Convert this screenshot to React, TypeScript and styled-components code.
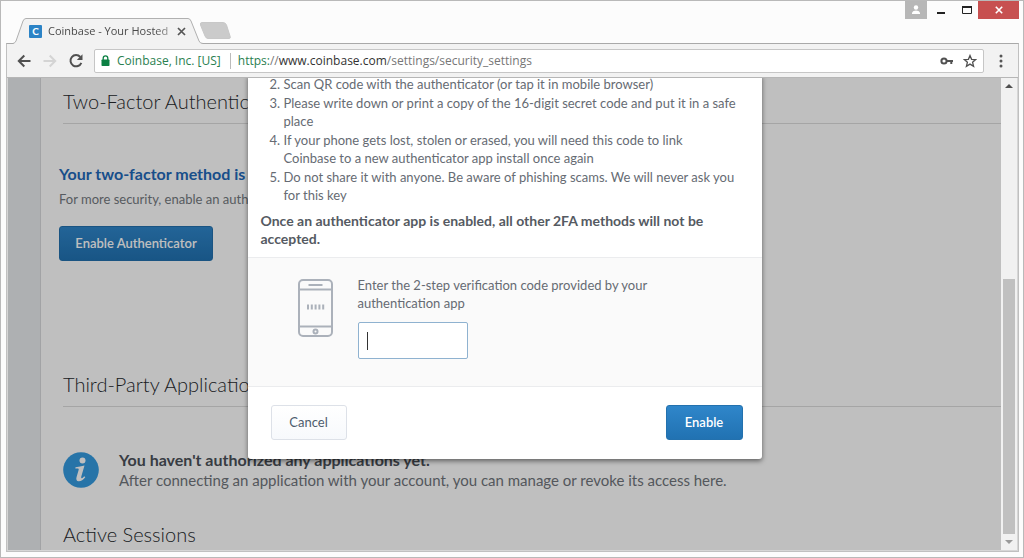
import React from "react";
import styled, { createGlobalStyle } from "styled-components";

const uiFont = '"Open Sans", "Noto Sans", sans-serif';
const bodyFont = 'Lato, "Open Sans", sans-serif';

const GlobalStyle = createGlobalStyle`
  *, *::before, *::after { box-sizing: border-box; }
  body { margin: 0; font-family: ${bodyFont}; }
  h2, p, ol { margin: 0; }
  button { font-family: inherit; cursor: pointer; }
`;

const Window = styled.div`
  display: flex;
  flex-direction: column;
  height: 100vh;
  padding: 0 4px 5px 5px;
  border: 1px solid #b9b9b9;
  background: #fcfcfc;
  overflow: hidden;
`;

const TitleBar = styled.header`
  display: flex;
  justify-content: space-between;
  height: 42px;
  flex: none;
  padding-left: 7px;
`;

const Tabs = styled.div`
  display: flex;
  align-items: flex-end;
`;

const Tab = styled.div`
  position: relative;
  z-index: 1;
  display: flex;
  align-items: center;
  width: 190px;
  height: 26px;
  margin-bottom: -1px;
  padding: 0 14px 0 16px;
  font: 11px/18px ${uiFont};
  color: #4a4a4a;
`;

const TabShape = styled.svg`
  position: absolute;
  inset: 0;
  z-index: -1;
`;

const Favicon = styled.span`
  display: flex;
  align-items: center;
  justify-content: center;
  width: 13px;
  height: 13px;
  margin-right: 6px;
  border-radius: 1px;
  background: #2b83c6;
  color: #fff;
  font: bold 10px/12px ${bodyFont};
`;

const TabTitle = styled.span`
  flex: 1;
  white-space: nowrap;
  mask-image: linear-gradient(to right, #000 85%, transparent 110%);
`;

const PlainButton = styled.button`
  display: flex;
  align-items: center;
  justify-content: center;
  flex: none;
  padding: 0;
  border: 0;
  background: none;
  color: #555;
`;

const CloseTab = styled(PlainButton)`
  width: 16px;
  height: 16px;
`;

const NewTab = styled(PlainButton)`
  height: 24px;
  margin-left: -4px;
`;

const WindowControls = styled.div`
  display: flex;
  align-items: flex-start;
`;

const WindowButton = styled(PlainButton)<{ $width: number; $fill?: string }>`
  width: ${(p) => p.$width}px;
  height: 18px;
  background: ${(p) => p.$fill ?? "none"};
`;

const Frame = styled.div`
  display: flex;
  flex-direction: column;
  flex: 1;
  min-height: 0;
  border: 1px solid #c0c0c0;
  border-top-color: #a9a9a9;
`;

const Toolbar = styled.nav`
  display: flex;
  align-items: center;
  flex: none;
  height: 34px;
  padding: 0 8px 0 9px;
  border-bottom: 1px solid #b6b6b6;
  background: #f2f2f2;
`;

const NavButton = styled(PlainButton)`
  width: 16px;
  height: 16px;
  margin-right: 10px;
`;

const AddressBar = styled.div`
  display: flex;
  align-items: center;
  flex: 1;
  height: 24px;
  padding: 0 5px 0 5px;
  border: 1px solid #c6c6c6;
  border-radius: 2px;
  background: #fff;
  font: 12px/20px ${uiFont};
  color: #777;
`;

const Identity = styled.span`
  margin-left: 6px;
  padding-right: 9px;
  border-right: 1px solid #bbb;
  color: #2a8050;
  line-height: 16px;
`;

const Url = styled.span`
  flex: 1;
  margin-left: 7px;
  white-space: nowrap;
`;

const Scheme = styled.span`
  color: #2a8050;
`;

const Host = styled.span`
  color: #333;
`;

const AddressAction = styled(PlainButton)`
  width: 16px;
  margin-left: 7px;
`;

const MenuButton = styled(PlainButton)`
  width: 18px;
  height: 18px;
  margin-left: 8px;
`;

const Content = styled.div`
  display: flex;
  flex: 1;
  min-height: 0;
  border: 1px solid #d6d6d6;
  border-top: 0;
`;

const Viewport = styled.div`
  position: relative;
  display: flex;
  flex: 1;
  overflow: hidden;
`;

const Sidebar = styled.aside`
  flex: none;
  width: 33px;
  border-right: 1px solid #d8dadc;
  background: #e9ebee;
`;

const Page = styled.main`
  flex: 1;
  min-width: 0;
  padding: 9px 0 0 22px;
  background: #fff;
`;

const SectionTitle = styled.h2<{ $space?: number }>`
  margin-top: ${(p) => p.$space ?? 0}px;
  padding-bottom: 8px;
  border-bottom: 1px solid #dcdcdc;
  font-size: 20px;
  line-height: 28px;
  font-weight: 300;
  color: #26292d;
`;

const Method = styled.section`
  margin: 38px 0 0 -4px;
`;

const MethodTitle = styled.p`
  font-size: 16px;
  line-height: 24px;
  font-weight: 700;
  color: #2268b8;
`;

const MethodText = styled.p`
  margin: 3px 0 17px;
  font-size: 13px;
  line-height: 20px;
  color: #757a80;
`;

const Button = styled.button<{ $kind: "primary" | "plain"; $width: number }>`
  width: ${(p) => p.$width}px;
  height: 35px;
  padding: 0 0 1px;
  border: 1px solid ${(p) => (p.$kind === "primary" ? "#2371ae" : "#dde1e8")};
  border-radius: 3px;
  background: ${(p) =>
    p.$kind === "primary"
      ? "linear-gradient(#2f86ca, #2172b2)"
      : "linear-gradient(#fff, #f7f9fc)"};
  color: ${(p) => (p.$kind === "primary" ? "#fff" : "#4e5c6e")};
  font-size: 13px;
  font-weight: ${(p) => (p.$kind === "primary" ? 600 : 400)};
`;

const Notice = styled.section`
  display: flex;
  align-items: center;
  gap: 20px;
  margin-top: 43px;
  font-size: 15px;
  line-height: 20px;
  color: #70757b;
`;

const NoticeTitle = styled.p`
  font-size: 16px;
  font-weight: 700;
  color: #4b5159;
`;

const Overlay = styled.div`
  position: absolute;
  inset: 0;
  display: flex;
  align-items: flex-end;
  justify-content: center;
  padding-bottom: 91px;
  background: rgba(0, 0, 0, 0.25);
`;

const Dialog = styled.div`
  width: 514px;
  border-radius: 0 0 3px 3px;
  background: #fff;
  box-shadow: 0 2px 5px rgba(0, 0, 0, 0.5);
  font-size: 13px;
  line-height: 18px;
  color: #666b73;
`;

const Instructions = styled.div`
  padding: 0 13px 9px;
`;

const Steps = styled.ol`
  display: grid;
  gap: 1px;
  padding-left: 23px;
`;

const Warning = styled.p`
  max-width: 460px;
  margin-top: 8px;
  font-size: 14px;
  font-weight: 700;
  color: #555a62;
`;

const CodePanel = styled.div`
  display: flex;
  gap: 25px;
  padding: 18px 50px 27px;
  border: solid #ebecee;
  border-width: 1px 0;
  background: #fafafa;
`;

const PhoneIcon = styled.svg`
  flex: none;
  margin-top: 3px;
`;

const CodeField = styled.div`
  max-width: 310px;
`;

const CodeLabel = styled.label`
  display: block;
  margin-bottom: 10px;
`;

const InputWrap = styled.div`
  position: relative;
  width: 110px;
`;

const CodeInput = styled.input`
  display: block;
  width: 100%;
  height: 37px;
  padding: 0 9px;
  border: 1px solid #8fb2d0;
  border-radius: 2px;
  background: #fff;
  font: 14px/18px ${bodyFont};
  outline: none;
`;

const Caret = styled.span`
  position: absolute;
  top: 10px;
  left: 9px;
  width: 1px;
  height: 18px;
  background: #333;
`;

const DialogFooter = styled.div`
  display: flex;
  justify-content: space-between;
  padding: 18px 19px 19px 23px;
`;

const Scrollbar = styled.div`
  display: flex;
  flex-direction: column;
  flex: none;
  width: 16px;
  background: #f1f1f1;
`;

const ScrollArrow = styled(PlainButton)`
  height: 16px;
`;

const Track = styled.div`
  display: flex;
  flex: 1;
  flex-direction: column;
  justify-content: flex-end;
  padding: 0 2px;
`;

const Thumb = styled.div`
  height: 58%;
  background: #c0c0c0;
`;

export default function App() {
  return (
    <Window>
      <GlobalStyle />
      <TitleBar>
        <Tabs>
          <Tab>
            <TabShape width="190" height="26" viewBox="0 0 190 26" aria-hidden="true">
              <path d="M0 26 Q2 25 3 23 L10 3 Q11 .5 13 .5 H175 Q177 .5 178 3 L186 23 Q187 25 190 26Z" fill="#f2f2f2" />
              <path d="M0 25.5 Q2 25 3 23 L10 3 Q11 .5 13 .5 H175 Q177 .5 178 3 L186 23 Q187 25.500 190 25.500" fill="none" stroke="#b0b0b0" />
            </TabShape>
            <Favicon>C</Favicon>
            <TabTitle>Coinbase - Your Hosted</TabTitle>
            <CloseTab aria-label="Close tab">
              <svg width="9" height="9" viewBox="0 0 9 9" stroke="currentColor" strokeWidth="1.7">
                <path d="M1 1l7 7M8 1l-7 7" />
              </svg>
            </CloseTab>
          </Tab>
          <NewTab aria-label="New tab">
            <svg width="34" height="18" viewBox="0 0 34 18">
              <path d="M3 .5H24Q26.500 .5 27.500 3L31 14Q32 16.500 30 16.500H9Q7 16.500 6 14L1.500 3Q.8 .5 3 .5Z" fill="#cbcbcb" stroke="#c8c8c8" />
            </svg>
          </NewTab>
        </Tabs>
        <WindowControls>
          <WindowButton $width={22} $fill="#b7b7b7" aria-label="Profile">
            <svg width="10" height="10" viewBox="0 0 10 10" fill="#fff">
              <circle cx="5" cy="2.500" r="2.200" />
              <path d="M1 9V7.500Q2 5.500 5 5.500T9 7.500V9Z" />
            </svg>
          </WindowButton>
          <WindowButton $width={28} aria-label="Minimize">
            <svg width="8" height="10"><path d="M0 8H8" stroke="#222" strokeWidth="2" /></svg>
          </WindowButton>
          <WindowButton $width={23} aria-label="Maximize">
            <svg width="10" height="8" viewBox="0 0 10 8"><path d="M.5 1H9.500V7.500H.5Z" fill="none" stroke="#222" /><path d="M0 1H10" stroke="#222" strokeWidth="2" /></svg>
          </WindowButton>
          <WindowButton $width={41} $fill="#c75050" aria-label="Close">
            <svg width="8" height="8" viewBox="0 0 8 8"><path d="M.8 .8l6.400 6.400M7.200 .8L.8 7.200" stroke="#fff" strokeWidth="1.600" /></svg>
          </WindowButton>
        </WindowControls>
      </TitleBar>

      <Frame>
        <Toolbar>
          <NavButton aria-label="Back">
            <svg width="14" height="14" viewBox="0 0 14 14" fill="none" stroke="#505050" strokeWidth="2"><path d="M13.500 7H2M7.300 1.500L1.800 7l5.500 5.500" /></svg>
          </NavButton>
          <NavButton aria-label="Forward">
            <svg width="14" height="14" viewBox="0 0 14 14" fill="none" stroke="#d4d4d4" strokeWidth="2"><path d="M.5 7H12M6.700 1.500L12.200 7l-5.500 5.500" /></svg>
          </NavButton>
          <NavButton aria-label="Reload">
            <svg width="14" height="14" viewBox="0 0 14 14"><path d="M11.300 3A5.600 5.600 0 1 0 12.300 8.800" fill="none" stroke="#505050" strokeWidth="2" /><path d="M13.500 .3V6H7.800Z" fill="#505050" /></svg>
          </NavButton>
          <AddressBar role="textbox" aria-label="Address">
            <svg width="11" height="12" viewBox="0 0 11 12"><rect x="1.500" y="4.500" width="8" height="6.500" rx=".8" fill="#0b8043" /><path d="M3.200 5V3.200a2.300 2.300 0 0 1 4.600 0V5" fill="none" stroke="#0b8043" strokeWidth="1.300" /></svg>
            <Identity>Coinbase, Inc. [US]</Identity>
            <Url>
              <Scheme>https:</Scheme>//<Host>www.coinbase.com</Host>/settings/security_settings
            </Url>
            <AddressAction aria-label="Saved password">
              <svg width="14" height="8" viewBox="0 0 14 8"><circle cx="4" cy="4" r="2.600" fill="none" stroke="#505050" strokeWidth="2" /><path d="M6.500 4H13M11.300 4V7" fill="none" stroke="#505050" strokeWidth="2" /></svg>
            </AddressAction>
            <AddressAction aria-label="Bookmark this page">
              <svg width="14" height="14" viewBox="0 0 14 14"><path d="M7 1.500L8.600 5.300 12.700 5.600 9.600 8.300 10.600 12.300 7 10.100 3.400 12.300 4.400 8.300 1.300 5.600 5.400 5.300Z" fill="none" stroke="#505050" strokeWidth="1.300" /></svg>
            </AddressAction>
          </AddressBar>
          <MenuButton aria-label="Menu">
            <svg width="4" height="14" viewBox="0 0 4 14" fill="#555"><circle cx="2" cy="2" r="1.500" /><circle cx="2" cy="7" r="1.500" /><circle cx="2" cy="12" r="1.500" /></svg>
          </MenuButton>
        </Toolbar>

        <Content>
          <Viewport>
            <Sidebar />
            <Page>
              <SectionTitle>Two-Factor Authentication</SectionTitle>
              <Method>
                <MethodTitle>Your two-factor method is</MethodTitle>
                <MethodText>For more security, enable an authenticator</MethodText>
                <Button $kind="primary" $width={154}>Enable Authenticator</Button>
              </Method>
              <SectionTitle $space={109}>Third-Party Applications</SectionTitle>
              <Notice>
                <svg width="36" height="36" viewBox="0 0 36 36" aria-hidden="true">
                  <circle cx="18" cy="18" r="17.800" fill="#349be0" />
                  <circle cx="19.500" cy="8.500" r="3" fill="#fff" />
                  <path d="M12.500 15.200Q17 14.600 21.500 13.600L18.300 24.500Q17.800 26.600 19 26.200 20 25.800 21.200 24.300L22.300 25.200Q19 29.600 15.500 29.300 12.600 28.800 13.500 25.200L15.700 17.800Q16 16.700 14.800 16.600L12.300 16.500Z" fill="#fff" />
                </svg>
                <div>
                  <NoticeTitle>You haven't authorized any applications yet.</NoticeTitle>
                  <p>After connecting an application with your account, you can manage or revoke its access here.</p>
                </div>
              </Notice>
              <SectionTitle $space={30}>Active Sessions</SectionTitle>
            </Page>

            <Overlay>
              <Dialog role="dialog" aria-label="Enable authenticator">
                <Instructions>
                  <Steps start={2}>
                    <li>Scan QR code with the authenticator (or tap it in mobile browser)</li>
                    <li>Please write down or print a copy of the 16-digit secret code and put it in a safe place</li>
                    <li>If your phone gets lost, stolen or erased, you will need this code to link Coinbase&nbsp;to a new authenticator app install once again</li>
                    <li>Do not share it with anyone. Be aware of phishing scams. We will never ask you for this key</li>
                  </Steps>
                  <Warning>Once an authenticator app is enabled, all other 2FA methods will not be accepted.</Warning>
                </Instructions>
                <CodePanel>
                  <PhoneIcon width="35" height="58" viewBox="0 0 35 58" fill="none" stroke="#abb1ba" strokeWidth="2" aria-hidden="true">
                    <rect x="1" y="1" width="33" height="56" rx="4" />
                    <path d="M1 10.500H34M1 47.500H34M10.500 6H24.500" />
                    <circle cx="17.500" cy="52.500" r="2" />
                    <path d="M10 25.500v5M13.800 25.500v5M17.600 25.500v5M21.400 25.500v5M25.200 25.500v5" />
                  </PhoneIcon>
                  <CodeField>
                    <CodeLabel htmlFor="code">Enter the 2-step verification code provided by your authentication app</CodeLabel>
                    <InputWrap>
                      <CodeInput id="code" type="text" />
                      <Caret />
                    </InputWrap>
                  </CodeField>
                </CodePanel>
                <DialogFooter>
                  <Button $kind="plain" $width={76}>Cancel</Button>
                  <Button $kind="primary" $width={77}>Enable</Button>
                </DialogFooter>
              </Dialog>
            </Overlay>
          </Viewport>
          <Scrollbar>
            <ScrollArrow aria-label="Scroll up">
              <svg width="8" height="4"><path d="M0 4L4 0L8 4Z" fill="#505050" /></svg>
            </ScrollArrow>
            <Track><Thumb /></Track>
            <ScrollArrow aria-label="Scroll down">
              <svg width="8" height="4"><path d="M0 0L4 4L8 0Z" fill="#9a9a9a" /></svg>
            </ScrollArrow>
          </Scrollbar>
        </Content>
      </Frame>
    </Window>
  );
}
